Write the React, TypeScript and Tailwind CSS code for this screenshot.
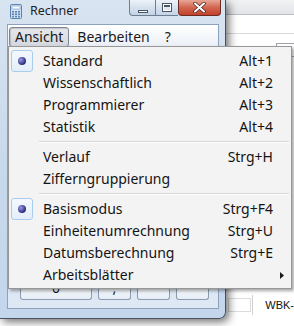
import React from 'react';

type Entry = { label: string; keys?: string; checked?: boolean; sub?: boolean } | 'sep';

// "Ansicht" menu of the Windows 7 calculator, top to bottom
const ENTRIES: Entry[] = [
  { label: 'Standard', keys: 'Alt+1', checked: true },
  { label: 'Wissenschaftlich', keys: 'Alt+2' },
  { label: 'Programmierer', keys: 'Alt+3' },
  { label: 'Statistik', keys: 'Alt+4' },
  'sep',
  { label: 'Verlauf', keys: 'Strg+H' },
  { label: 'Zifferngruppierung' },
  'sep',
  { label: 'Basismodus', keys: 'Strg+F4', checked: true },
  { label: 'Einheitenumrechnung', keys: 'Strg+U' },
  { label: 'Datumsberechnung', keys: 'Strg+E' },
  { label: 'Arbeitsblätter', sub: true },
];

const CalcIcon = () => (
  <svg width="12" height="15" viewBox="0 0 12 15">
    <rect x="0.5" y="0.5" width="11" height="14" rx="1" fill="#cfe0f3" stroke="#5d82ad" />
    <rect x="2" y="2" width="8" height="3" fill="#f7fbff" stroke="#7d9cc2" strokeWidth="0.6" />
    {[0, 1, 2].map(r =>
      [0, 1, 2].map(c => (
        <rect key={`${r}-${c}`} x={2 + c * 3} y={7 + r * 2.4} width="2" height="1.6" fill="#5f86b5" />
      ))
    )}
  </svg>
);

const CaptionButton = ({ kind }: { kind: 'min' | 'max' | 'close' }) => {
  if (kind === 'close') {
    return (
      <div className="w-[43px] h-[16px] rounded-b-[4px] border border-t-0 border-[#6b2a22] bg-gradient-to-b from-[#e6a797] via-[#d2654f] to-[#c2412b] flex items-center justify-center">
        <svg width="13" height="11" viewBox="0 0 13 11">
          <path d="M2 1.5 L11 9.5 M11 1.5 L2 9.5" stroke="#4a2420" strokeWidth="3.4" strokeLinecap="round" />
          <path d="M2 1.5 L11 9.5 M11 1.5 L2 9.5" stroke="#ffffff" strokeWidth="2" strokeLinecap="round" />
        </svg>
      </div>
    );
  }
  return (
    <div
      className={`${kind === 'min' ? 'w-[26px] rounded-bl-[4px]' : 'w-[23px]'} h-[16px] border border-t-0 border-r-0 border-[#6e7d90] bg-gradient-to-b from-[#eef3f9] via-[#d6e1ee] to-[#c3d3e6] flex items-center justify-center`}
    >
      {kind === 'min' ? (
        <div className="mt-[7px] w-[10px] h-[3px] bg-white border border-[#4b5563]" />
      ) : (
        <div className="w-[10px] h-[9px] border border-[#4b5563] bg-white p-[1px]">
          <div className="w-full h-full border-t-[2px] border-[#4b5563] bg-[#dfe8f3]" />
        </div>
      )}
    </div>
  );
};

// only the lower strip of the bottom key row peeks out below the menu
const CalcKey = ({ w, label }: { w: string; label?: string }) => (
  <div
    className={`${w} h-[12px] overflow-hidden rounded-b-[3px] border border-t-0 border-[#8c9bb0] bg-gradient-to-b from-[#f6f9fc] to-[#e6edf6] flex justify-center text-[14px] text-[#1a1a1a]`}
  >
    {label && <span className="leading-[12px] -mt-[6px]">{label}</span>}
  </div>
);

export default function App() {
  return (
    <div className="relative w-[294px] h-[326px] overflow-hidden bg-white font-['Noto_Sans','Open_Sans',sans-serif]">
      {/* spreadsheet behind the calculator */}
      <div className="flex flex-col h-full">
        <div className="h-[15px] border-b border-[#b9bec6] bg-gradient-to-b from-[#f2f2f2] to-[#e2e4e8]" />
        <div className="h-[19px] border-b border-[#d8dadd]" />
        <div className="flex justify-end pt-[9px]">
          <div className="w-[18px] h-[14px] border border-[#9ea3aa] border-r-0" />
        </div>
        <div className="mt-auto mb-[14px] flex items-center h-[14px]">
          <div className="ml-[228px] w-[26px] h-[14px] border border-[#dcdcdc]" />
          <div className="ml-[1px] w-px h-[20px] bg-[#d0d0d0]" />
          <span className="ml-[12px] text-[11px] leading-[14px] text-[#111] font-['Liberation_Sans',sans-serif]">WBK-</span>
        </div>
      </div>

      {/* calculator window */}
      <div className="absolute left-0 top-0 w-[226px] h-[319px] flex flex-col rounded-br-[7px] border-r border-b border-[#48525e] bg-gradient-to-b from-[#d9e4f1] via-[#c9d9ec] to-[#c4d6ec] shadow-[3px_3px_9px_rgba(0,0,0,0.55)]">
        <div className="h-[24px] flex items-start shrink-0">
          <div className="ml-[10px] mt-[4px]">
            <CalcIcon />
          </div>
          <span className="ml-[8px] mt-[3px] text-[12.5px] leading-[16px] text-[#1e1e1e]">Rechner</span>
          <div className="ml-auto mr-[4px] flex">
            <CaptionButton kind="min" />
            <CaptionButton kind="max" />
            <CaptionButton kind="close" />
          </div>
        </div>
        <div className="ml-[7px] mr-[6px] mb-[9px] flex-1 flex flex-col border border-[#8da2bd] bg-[#dde8f4]">
          <div className="h-[23px] shrink-0 flex items-start pt-[2px] pl-[1px] bg-gradient-to-b from-[#ffffff] to-[#e9eef5] text-[14px] text-[#1a1a1a]">
            <div className="h-[20px] px-[5px] leading-[18px] rounded-[3px] border border-[#7d8590] bg-gradient-to-b from-[#e6e8ec] to-[#d4d8de] shadow-[inset_1px_1px_1px_rgba(0,0,0,0.15)]">
              Ansicht
            </div>
            <span className="ml-[8px] leading-[20px]">Bearbeiten</span>
            <span className="ml-[15px] leading-[20px]">?</span>
          </div>
          <div className="flex-1 flex items-end pb-[8px] pl-[12px] gap-[6px]">
            <CalcKey w="w-[72px]" label="0" />
            <CalcKey w="w-[33px]" label="," />
            <CalcKey w="w-[33px]" />
            <CalcKey w="w-[33px]" />
          </div>
        </div>
      </div>

      {/* open dropdown */}
      <div className="absolute left-[8px] top-[46px] w-[284px] pt-[3px] pb-[2px] border border-[#979797] bg-[#f3f3f3] shadow-[2px_2px_3px_rgba(0,0,0,0.35)] text-[14px] text-[#141414]">
        {ENTRIES.map((e, i) =>
          e === 'sep' ? (
            <div key={i} className="h-[8px] flex flex-col justify-center pl-[30px] pr-[2px]">
              <div className="h-px bg-[#d7d7d7]" />
              <div className="h-px bg-white" />
            </div>
          ) : (
            <div key={i} className="h-[22px] flex items-center pl-[2px] leading-[22px]">
              <div className="w-[22px] h-[22px] shrink-0">
                {e.checked && (
                  <div className="w-full h-full rounded-[3px] border border-[#a9cbec] bg-gradient-to-b from-[#f4f8fd] to-[#e4eefa] flex items-center justify-center">
                    <div className="w-[8px] h-[8px] rounded-full bg-[radial-gradient(circle_at_35%_35%,#9a9ae6,#2b2b7c_70%)]" />
                  </div>
                )}
              </div>
              <span className="ml-[10px] flex-1 whitespace-nowrap">{e.label}</span>
              {e.keys && <span className="whitespace-nowrap">{e.keys}</span>}
              <div className="w-[18px] flex justify-center">
                {e.sub && (
                  <svg width="4" height="7" viewBox="0 0 4 7">
                    <path d="M0 0 L4 3.5 L0 7 Z" fill="#1a1a1a" />
                  </svg>
                )}
              </div>
            </div>
          )
        )}
      </div>
    </div>
  );
}
